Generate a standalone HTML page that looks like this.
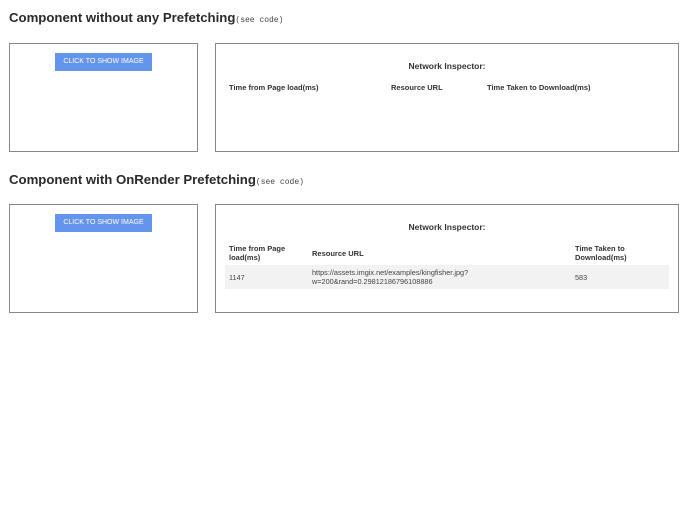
<!DOCTYPE html>
<html><head><style>
body{margin:0;width:688px;height:512px;background:#fff;font-family:"Liberation Sans",sans-serif;color:#222;position:relative;overflow:hidden}
.h{position:absolute;left:9px;font-size:13.2px;font-weight:bold;color:#2a2a2a}
.h code{font-family:"Liberation Mono",monospace;font-size:8px;font-weight:normal;color:#444}
.box{position:absolute;border:1px solid #888;box-sizing:border-box}
.btn{position:absolute;left:45px;top:9px;width:97px;height:18px;background:#6495ed;color:#fff;font-size:7px;line-height:18px;text-align:center}
.t{position:absolute;font-size:7.5px;font-weight:bold;color:#333;line-height:9px}
.n{position:absolute;font-size:7.3px;color:#444;line-height:9px}
.ttl{position:absolute;left:0;width:100%;text-align:center;font-size:8.5px;font-weight:bold;color:#333}
</style></head><body>
<div class="h" style="top:10px">Component without any Prefetching<code>(see code)</code></div>
<div class="box" style="left:9px;top:43px;width:189px;height:109px"><div class="btn">CLICK TO SHOW IMAGE</div></div>
<div class="box" style="left:215px;top:43px;width:464px;height:109px">
<div class="ttl" style="top:17px">Network Inspector:</div>
<div class="t" style="left:13px;top:39px">Time from Page load(ms)</div>
<div class="t" style="left:175px;top:39px">Resource URL</div>
<div class="t" style="left:271px;top:39px">Time Taken to Download(ms)</div>
</div>
<div class="h" style="top:172px">Component with OnRender Prefetching<code>(see code)</code></div>
<div class="box" style="left:9px;top:204px;width:189px;height:109px"><div class="btn">CLICK TO SHOW IMAGE</div></div>
<div class="box" style="left:215px;top:204px;width:464px;height:109px">
<div class="ttl" style="top:17px">Network Inspector:</div>
<div class="t" style="left:13px;top:39px">Time from Page<br>load(ms)</div>
<div class="t" style="left:96px;top:44px">Resource URL</div>
<div class="t" style="left:359px;top:39px">Time Taken to<br>Download(ms)</div>
<div style="position:absolute;left:9px;top:60px;width:444px;height:24px;background:#f2f2f2"></div>
<div class="n" style="left:13px;top:68px">1147</div>
<div class="n" style="left:96px;top:63px">https://assets.imgix.net/examples/kingfisher.jpg?<br>w=200&amp;rand=0.29812186796108886</div>
<div class="n" style="left:359px;top:68px">583</div>
</div>
</body></html>
